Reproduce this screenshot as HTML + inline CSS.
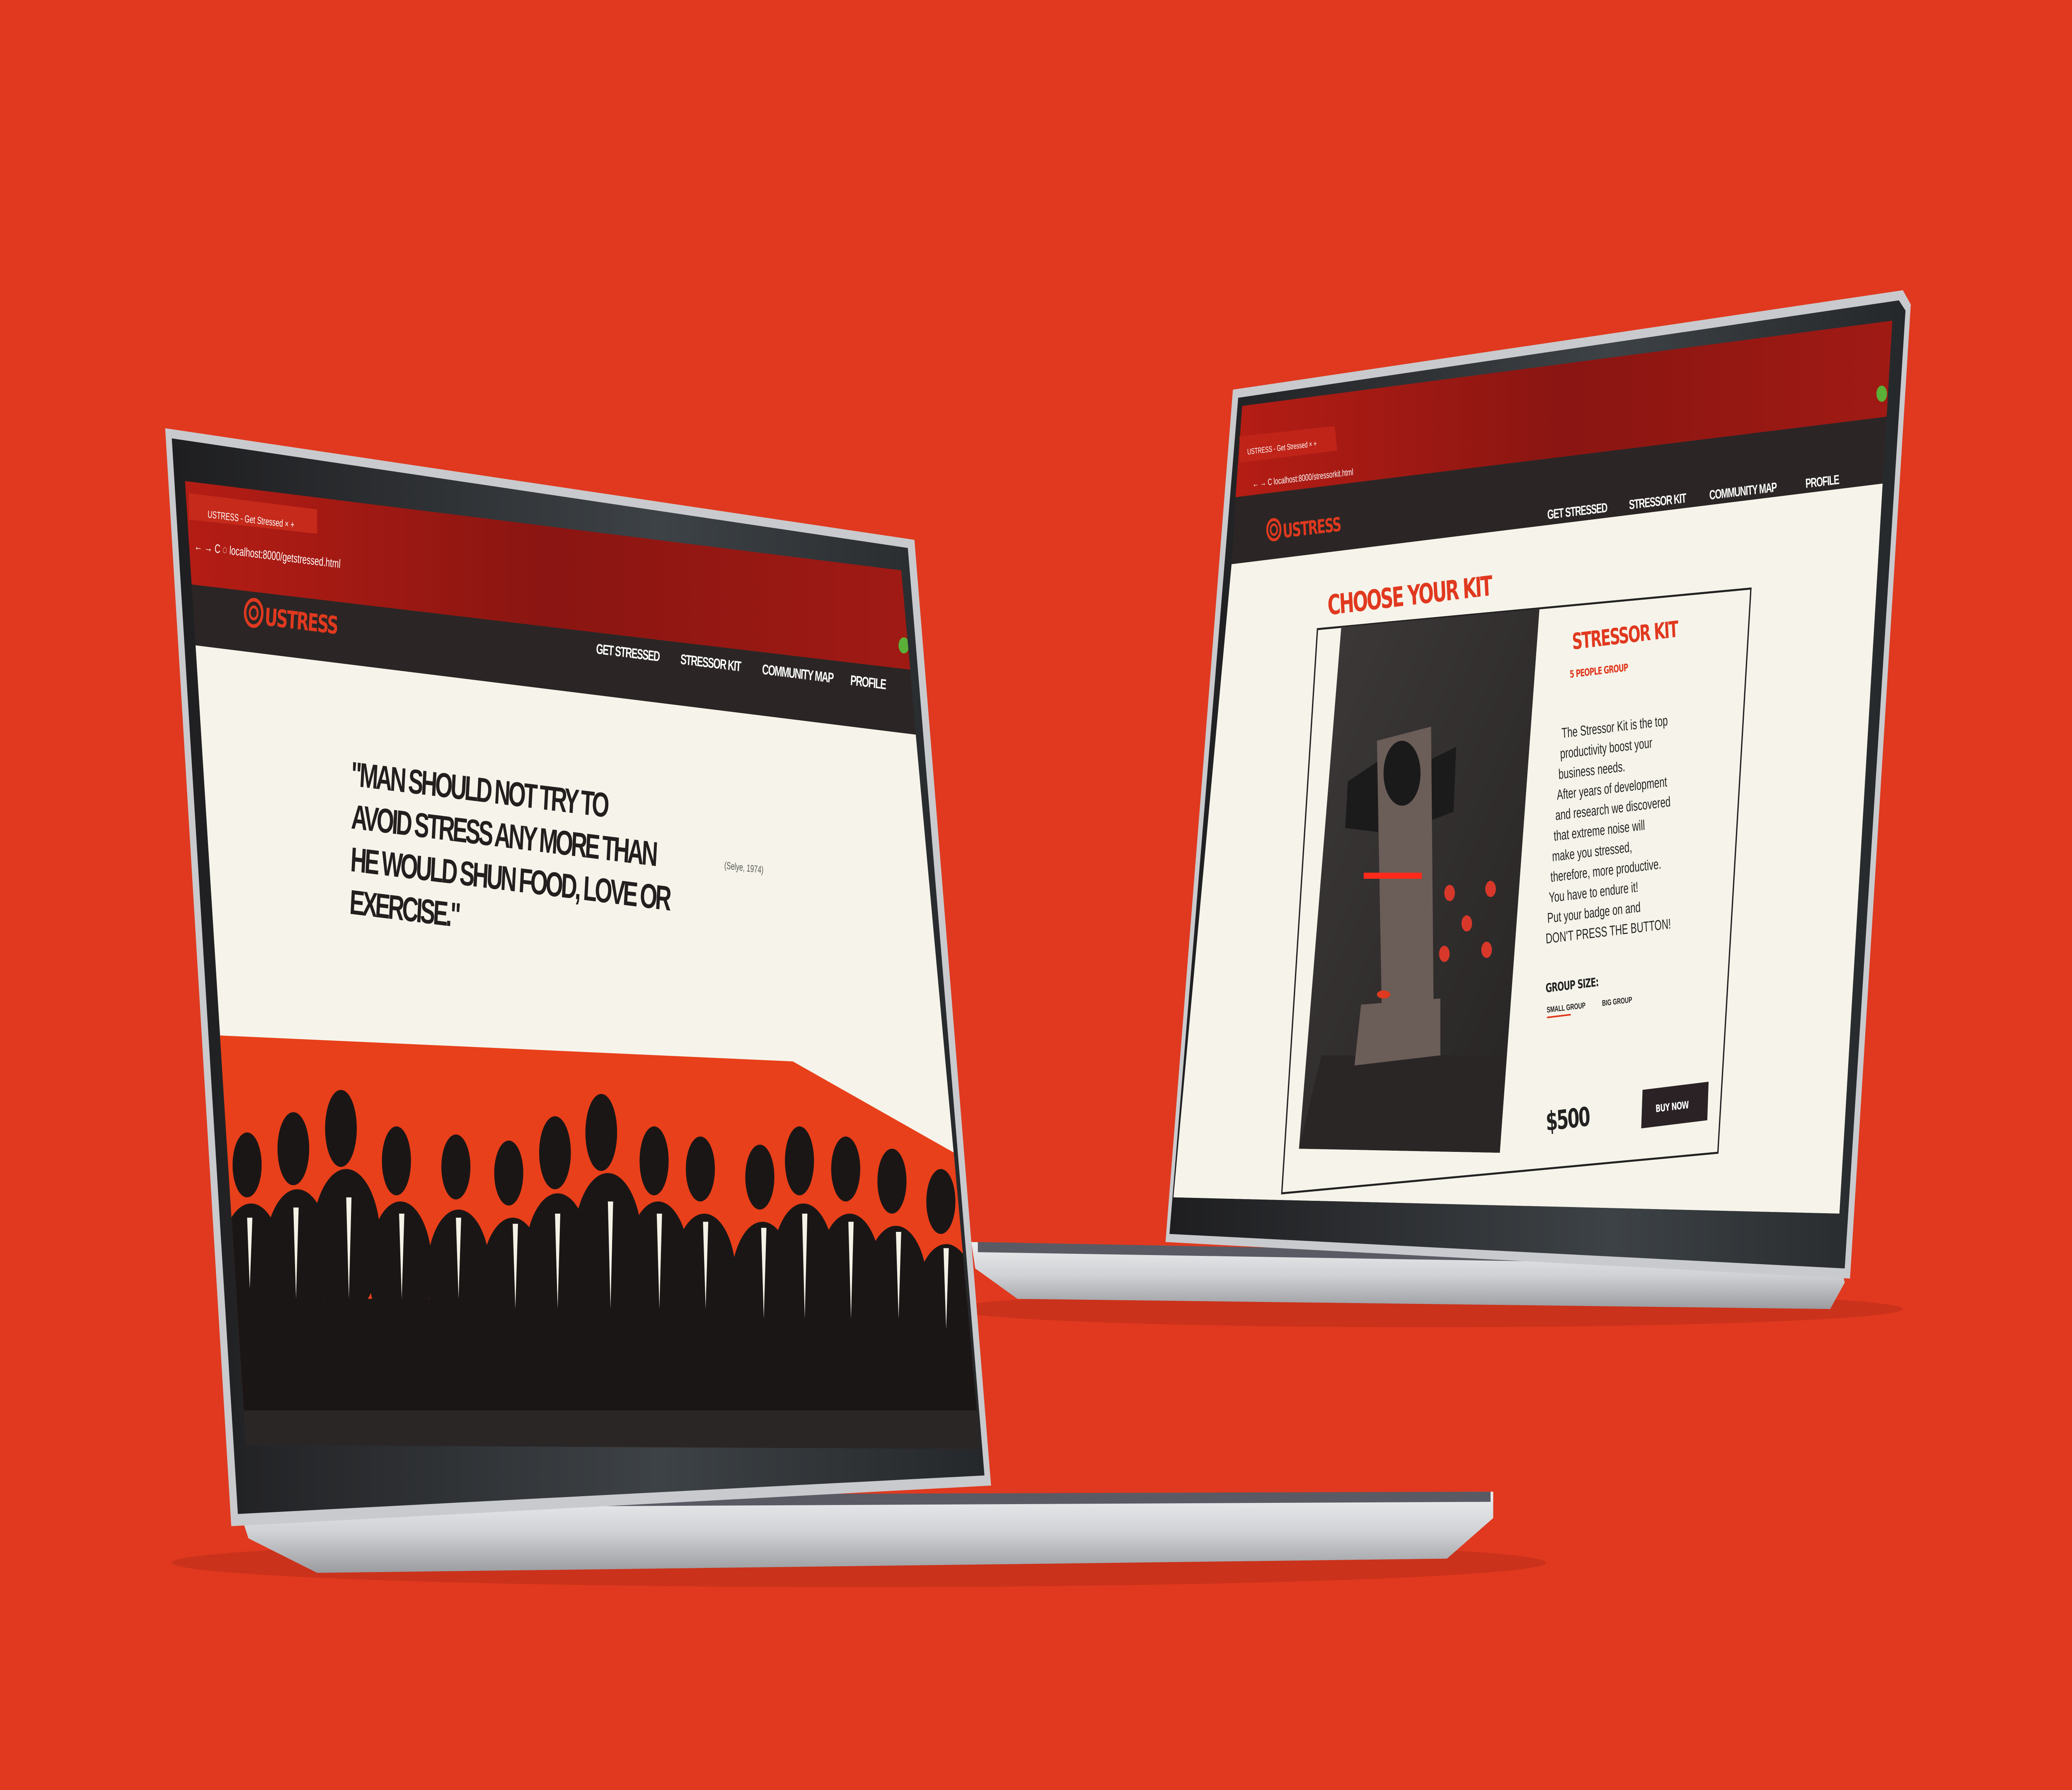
<!DOCTYPE html>
<html><head><meta charset="utf-8"><style>
html,body{margin:0;padding:0;background:#e0391f;width:100%;height:100%;overflow:hidden;}
svg{display:block;width:100vw;height:100vh;}
text{font-family:"Liberation Sans",sans-serif;font-weight:bold;}
.h{font-family:"DejaVu Sans","Liberation Sans",sans-serif;font-weight:bold;}
</style></head><body>
<svg viewBox="0 0 1568 882" preserveAspectRatio="none" xmlns="http://www.w3.org/2000/svg">
<defs>
<clipPath id="dl"><polygon points="140,237 682,281 742,714 186,712"/></clipPath>
<clipPath id="dr"><polygon points="940,200 1432,158 1392,598 888,590"/></clipPath>
<linearGradient id="base" x1="0" y1="0" x2="0" y2="1"><stop offset="0" stop-color="#eceef0"/><stop offset="0.5" stop-color="#cfd1d4"/><stop offset="1" stop-color="#9a9ca0"/></linearGradient>
<linearGradient id="chr" x1="0" y1="0" x2="1" y2="0"><stop offset="0" stop-color="#b41d14"/><stop offset="0.5" stop-color="#8a1512"/><stop offset="1" stop-color="#a01a14"/></linearGradient>
<linearGradient id="bez" x1="0" y1="0" x2="1" y2="0"><stop offset="0" stop-color="#1e1e20"/><stop offset="0.6" stop-color="#3d4246"/><stop offset="1" stop-color="#25282a"/></linearGradient>
<linearGradient id="kit" x1="0" y1="0" x2="1" y2="1"><stop offset="0" stop-color="#3e3a3a"/><stop offset="1" stop-color="#262323"/></linearGradient>
</defs>
<rect width="1568" height="882" fill="#e0391f"/>
<ellipse cx="650" cy="770" rx="520" ry="12" fill="#b52b17" opacity="0.5"/>
<ellipse cx="1080" cy="645" rx="360" ry="9" fill="#b52b17" opacity="0.5"/>

<!-- RIGHT LAPTOP -->
<polygon points="735,612 1392,620 1396,632 1385,645 770,640 738,625" fill="url(#base)"/>
<polygon points="740,612 1392,620 1392,624 740,617" fill="#5a5a64"/>
<polygon points="933,192 1440,143 1446,150 1400,630 882,612" fill="#c9cacd"/>
<polygon points="937,196 1437,148 1442,153 1396,625 885,608" fill="url(#bez)"/>
<g clip-path="url(#dr)">
<polygon points="940,200 1432,158 1432,205 935,245" fill="url(#chr)"/>
<polygon points="935,245 1432,205 1428,238 932,278" fill="#2b2625"/>
<polygon points="932,278 1428,238 1392,598 888,590" fill="#f6f4ea"/>
<polygon points="938,215 1010,210 1012,222 938,228" fill="#c02418"/>
<text transform="translate(944,224) rotate(-4.5)" font-size="4" fill="#fff" style="font-weight:normal">USTRESS - Get Stressed    ×   +</text>
<text transform="translate(948,240) rotate(-4.5)" font-size="4.5" fill="#fff" style="font-weight:normal">← → C  localhost:8000/stressorkit.html</text>
<circle cx="1424" cy="194" r="4" fill="#5bb038"/>
<g transform="translate(964,261)"><circle r="5" fill="none" stroke="#e0391f" stroke-width="1.5"/><circle r="2.5" fill="none" stroke="#e0391f" stroke-width="1.2"/></g>
<text class="h" transform="translate(971,265) rotate(-4.5)" font-size="9.5" fill="#e0391f" letter-spacing="-0.6">USTRESS</text>
<g class="h" transform="rotate(-4.5 1270 238)" font-size="6.5" fill="#fff" letter-spacing="-0.4">
<text x="1170" y="248">GET STRESSED</text><text x="1232" y="248">STRESSOR KIT</text><text x="1293" y="248">COMMUNITY MAP</text><text x="1366" y="248">PROFILE</text></g>
<text class="h" transform="translate(1005,303) rotate(-4.5)" font-size="13.5" fill="#e0391f" letter-spacing="-1">CHOOSE YOUR KIT</text>
<polygon points="997,310 1325,290 1300,568 970,588" fill="none" stroke="#222" stroke-width="1"/>
<polygon points="1015,309 1165,300 1135,568 983,566" fill="url(#kit)"/>
<polygon points="1000,520 1140,520 1135,568 983,566" fill="#2a2626"/>
<polygon points="1020,385 1043,375 1043,410 1018,408" fill="#1c1b1b"/>
<polygon points="1080,375 1102,368 1100,400 1080,405" fill="#1c1b1b"/>
<polygon points="1042,365 1083,358 1085,505 1046,510" fill="#6b5d58"/>
<polygon points="1030,495 1090,492 1090,520 1025,525" fill="#6b5d58"/>
<ellipse cx="1061" cy="381" rx="14" ry="16" fill="#1a1a1a"/>
<rect x="1032" y="430" width="44" height="3" fill="#ff2a1a"/>
<ellipse cx="1047" cy="490" rx="5" ry="2" fill="#e0391f"/>
<g fill="#d8382a">
<circle cx="1097" cy="440" r="4"/><circle cx="1128" cy="438" r="4"/><circle cx="1110" cy="455" r="4"/><circle cx="1093" cy="470" r="4"/><circle cx="1125" cy="468" r="4"/></g>
<text class="h" transform="translate(1190,320) rotate(-4.5)" font-size="11" fill="#e0391f" letter-spacing="-0.7">STRESSOR KIT</text>
<text class="h" transform="translate(1188,334) rotate(-4.5)" font-size="5" fill="#e0391f" letter-spacing="-0.3">5 PEOPLE GROUP</text>
<g transform="rotate(-4.5 1230 400)" font-size="7" fill="#222">
<text x="1185" y="360" style="font-weight:normal">The Stressor Kit is the top</text>
<text x="1183" y="370" style="font-weight:normal">productivity boost your</text>
<text x="1181" y="380" style="font-weight:normal">business needs.</text>
<text x="1179" y="390" style="font-weight:normal">After years of development</text>
<text x="1177" y="400" style="font-weight:normal">and research we discovered</text>
<text x="1175" y="410" style="font-weight:normal">that extreme noise will</text>
<text x="1173" y="420" style="font-weight:normal">make you stressed,</text>
<text x="1171" y="430" style="font-weight:normal">therefore, more productive.</text>
<text x="1169" y="440" style="font-weight:normal">You have to endure it!</text>
<text x="1167" y="450" style="font-weight:normal">Put your badge on and</text>
<text x="1165" y="460" style="font-weight:normal">DON'T PRESS THE BUTTON!</text>
<text class="h" x="1163" y="484" font-size="6" letter-spacing="-0.3">GROUP SIZE:</text>
<text x="1163" y="494" font-size="4">SMALL GROUP</text><text x="1205" y="494" font-size="4">BIG GROUP</text>
<rect x="1163" y="496" width="18" height="0.8" fill="#e0391f"/>
<text class="h" x="1158" y="552" font-size="13" letter-spacing="-0.8">$500</text>
</g>
<polygon points="1243,537 1293,533 1292,552 1242,556" fill="#2a2224" rx="2"/>
<text class="h" transform="translate(1253,548) rotate(-4.5)" font-size="5" fill="#fff" letter-spacing="-0.3">BUY NOW</text>
</g>

<!-- LEFT LAPTOP -->
<polygon points="178,738 1130,735 1130,748 1095,768 240,775 188,758" fill="url(#base)"/>
<polygon points="185,737 1128,735 1128,740 185,743" fill="#5a5a64"/>
<polygon points="125,211 692,266 750,732 175,752" fill="#c9cacd"/>
<polygon points="130,216 687,270 745,727 180,746" fill="url(#bez)"/>
<g clip-path="url(#dl)">
<polygon points="140,237 682,281 689,330 145,288" fill="url(#chr)"/>
<polygon points="145,288 689,330 693,362 148,318" fill="#2b2625"/>
<polygon points="148,318 693,362 742,714 186,712" fill="#f6f4ea"/>
<polygon points="143,243 240,251 240,263 143,256" fill="#c52a1b"/>
<text transform="translate(157,255) rotate(4.6)" font-size="5" fill="#fff" style="font-weight:normal">USTRESS - Get Stressed         ×   +</text>
<text transform="translate(147,271) rotate(4.6)" font-size="6" fill="#fff" style="font-weight:normal">← → C  ◌ localhost:8000/getstressed.html</text>
<circle cx="684" cy="318" r="4" fill="#5bb038"/>
<g transform="translate(192,302)"><circle r="6.5" fill="none" stroke="#e0391f" stroke-width="1.8"/><circle r="3" fill="none" stroke="#e0391f" stroke-width="1.4"/></g>
<text class="h" transform="translate(200,308) rotate(4.6)" font-size="12" fill="#e0391f" letter-spacing="-0.8">USTRESS</text>
<g class="h" transform="rotate(4.6 550 338)" font-size="7" fill="#fff" letter-spacing="-0.5">
<text x="450" y="330">GET STRESSED</text><text x="514" y="330">STRESSOR KIT</text><text x="576" y="330">COMMUNITY MAP</text><text x="643" y="330">PROFILE</text></g>
<g class="h" transform="rotate(4.6 400 420)" font-size="17" fill="#231f1f" letter-spacing="-1.6">
<text x="263" y="398">"MAN SHOULD NOT TRY TO</text>
<text x="265" y="419">AVOID STRESS ANY MORE THAN</text>
<text x="266" y="440">HE WOULD SHUN FOOD, LOVE OR</text>
<text x="267" y="461">EXERCISE."</text>
</g>
<text transform="translate(548,428) rotate(4.6)" font-size="5" fill="#555" style="font-weight:normal">(Selye, 1974)</text>
<polygon points="159,510 600,523 722,568 742,714 186,712" fill="#e8401a"/>
<g fill="#1b1616">
<g id="p"></g>
<ellipse cx="187" cy="574" rx="11" ry="16"/><ellipse cx="222" cy="566" rx="12" ry="18"/><ellipse cx="258" cy="556" rx="12" ry="19"/><ellipse cx="300" cy="572" rx="11" ry="17"/><ellipse cx="345" cy="575" rx="11" ry="16"/><ellipse cx="385" cy="578" rx="11" ry="16"/><ellipse cx="420" cy="568" rx="12" ry="18"/><ellipse cx="455" cy="558" rx="12" ry="19"/><ellipse cx="495" cy="572" rx="11" ry="17"/><ellipse cx="530" cy="576" rx="11" ry="16"/><ellipse cx="575" cy="580" rx="11" ry="16"/><ellipse cx="605" cy="572" rx="11" ry="17"/><ellipse cx="640" cy="576" rx="11" ry="16"/><ellipse cx="675" cy="582" rx="11" ry="16"/><ellipse cx="712" cy="592" rx="11" ry="16"/>
<ellipse cx="190" cy="625" rx="24" ry="32"/><ellipse cx="225" cy="620" rx="25" ry="34"/><ellipse cx="262" cy="612" rx="26" ry="36"/><ellipse cx="303" cy="625" rx="24" ry="33"/><ellipse cx="347" cy="628" rx="24" ry="32"/><ellipse cx="388" cy="632" rx="24" ry="32"/><ellipse cx="422" cy="622" rx="25" ry="34"/><ellipse cx="460" cy="614" rx="26" ry="36"/><ellipse cx="498" cy="625" rx="24" ry="33"/><ellipse cx="533" cy="630" rx="24" ry="32"/><ellipse cx="577" cy="634" rx="24" ry="32"/><ellipse cx="608" cy="626" rx="24" ry="33"/><ellipse cx="643" cy="630" rx="24" ry="32"/><ellipse cx="678" cy="636" rx="24" ry="32"/><ellipse cx="716" cy="645" rx="24" ry="32"/>
<rect x="150" y="640" width="620" height="80"/>
</g>
<g fill="#f4f1e6">
<polygon points="187,600 191,600 189,635"/><polygon points="222,595 226,595 224,640"/><polygon points="262,590 266,590 264,640"/><polygon points="302,598 306,598 304,640"/><polygon points="345,600 349,600 347,640"/><polygon points="388,603 392,603 390,645"/><polygon points="420,598 424,598 422,645"/><polygon points="460,592 464,592 462,645"/><polygon points="497,598 501,598 499,645"/><polygon points="532,602 536,602 534,645"/><polygon points="576,605 580,605 578,650"/><polygon points="607,598 611,598 609,650"/><polygon points="642,602 646,602 644,650"/><polygon points="678,607 682,607 680,650"/><polygon points="714,615 718,615 716,655"/>
</g>
<rect x="150" y="695" width="620" height="25" fill="#2a2626"/>
</g>
</svg>
</body></html>
